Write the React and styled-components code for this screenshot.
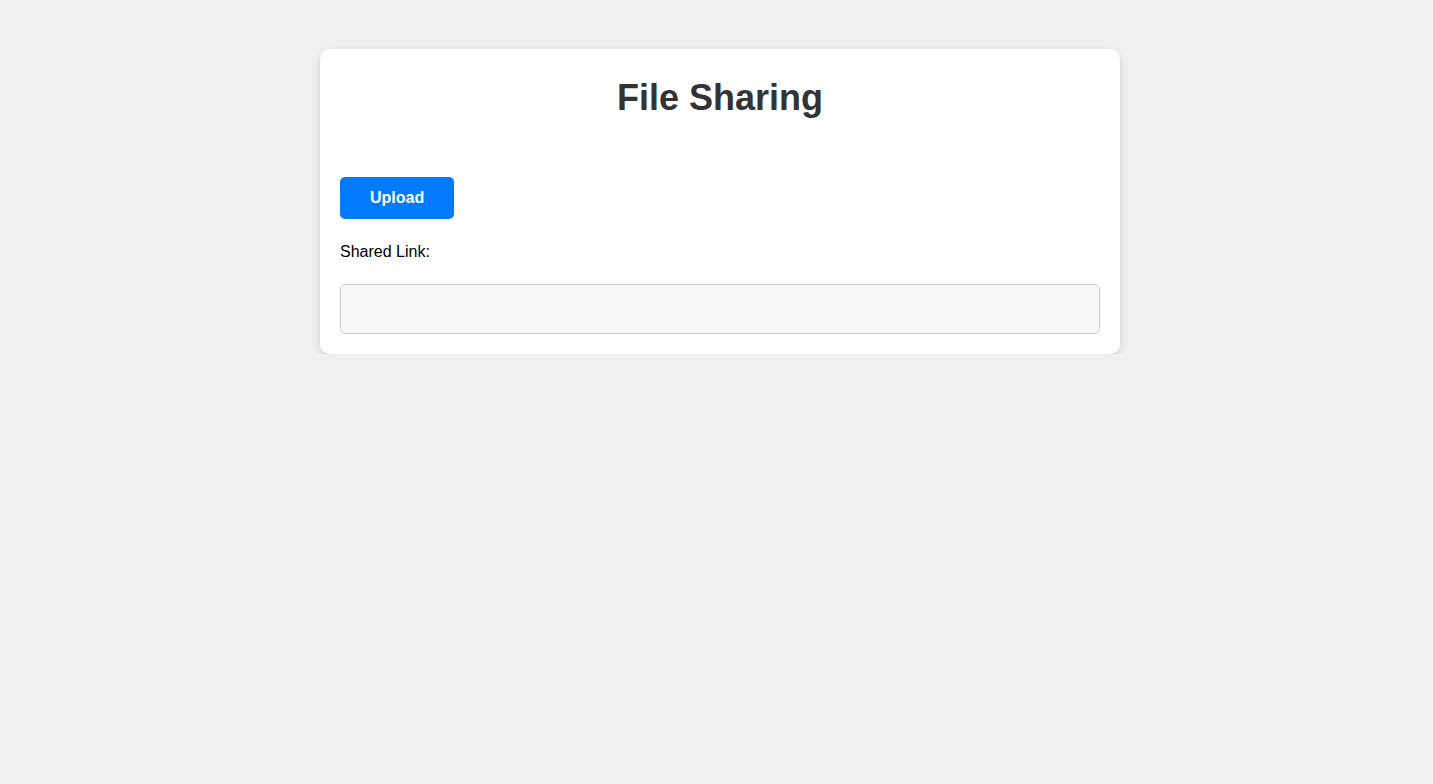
import React from 'react';
import styled, { createGlobalStyle } from 'styled-components';

const GlobalStyle = createGlobalStyle`
  body {
    margin: 0;
    background-color: #f0f0f0;
    font-family: "Liberation Sans", Arial, sans-serif;
  }
`;

const Page = styled.div`
  padding: 49px 0 0 7px;
`;

const Card = styled.div`
  margin: 0 auto;
  width: 800px;
  box-sizing: border-box;
  padding: 20px;
  background-color: #fff;
  border-radius: 10px;
  box-shadow: 0 3px 10px rgba(0, 0, 0, 0.13);
`;

const Title = styled.h1`
  margin: 8px 0 59px;
  text-align: center;
  color: #333;
  font-size: 36px;
  font-weight: bold;
  line-height: 41px;
`;

const UploadButton = styled.button`
  display: block;
  padding: 12px 30px;
  border: none;
  border-radius: 5px;
  background-color: #007bff;
  color: #fff;
  font-family: inherit;
  font-size: 16px;
  font-weight: bold;
  line-height: 18px;
  cursor: pointer;
`;

const Label = styled.p`
  margin: 24px 0 23px;
  color: #000;
  font-size: 16px;
  line-height: 18px;
`;

const LinkField = styled.input`
  display: block;
  width: 100%;
  height: 50px;
  box-sizing: border-box;
  padding: 0 12px;
  border: 1px solid #ccc;
  border-radius: 5px;
  background-color: #f8f8f8;
  font-family: inherit;
  font-size: 16px;
  outline: none;
`;

const App = () => {
  return (
    <Page>
      <GlobalStyle />
      <Card>
        <Title>File Sharing</Title>
        <UploadButton>Upload</UploadButton>
        <Label>Shared Link:</Label>
        <LinkField type="text" readOnly />
      </Card>
    </Page>
  );
};

export default App;
